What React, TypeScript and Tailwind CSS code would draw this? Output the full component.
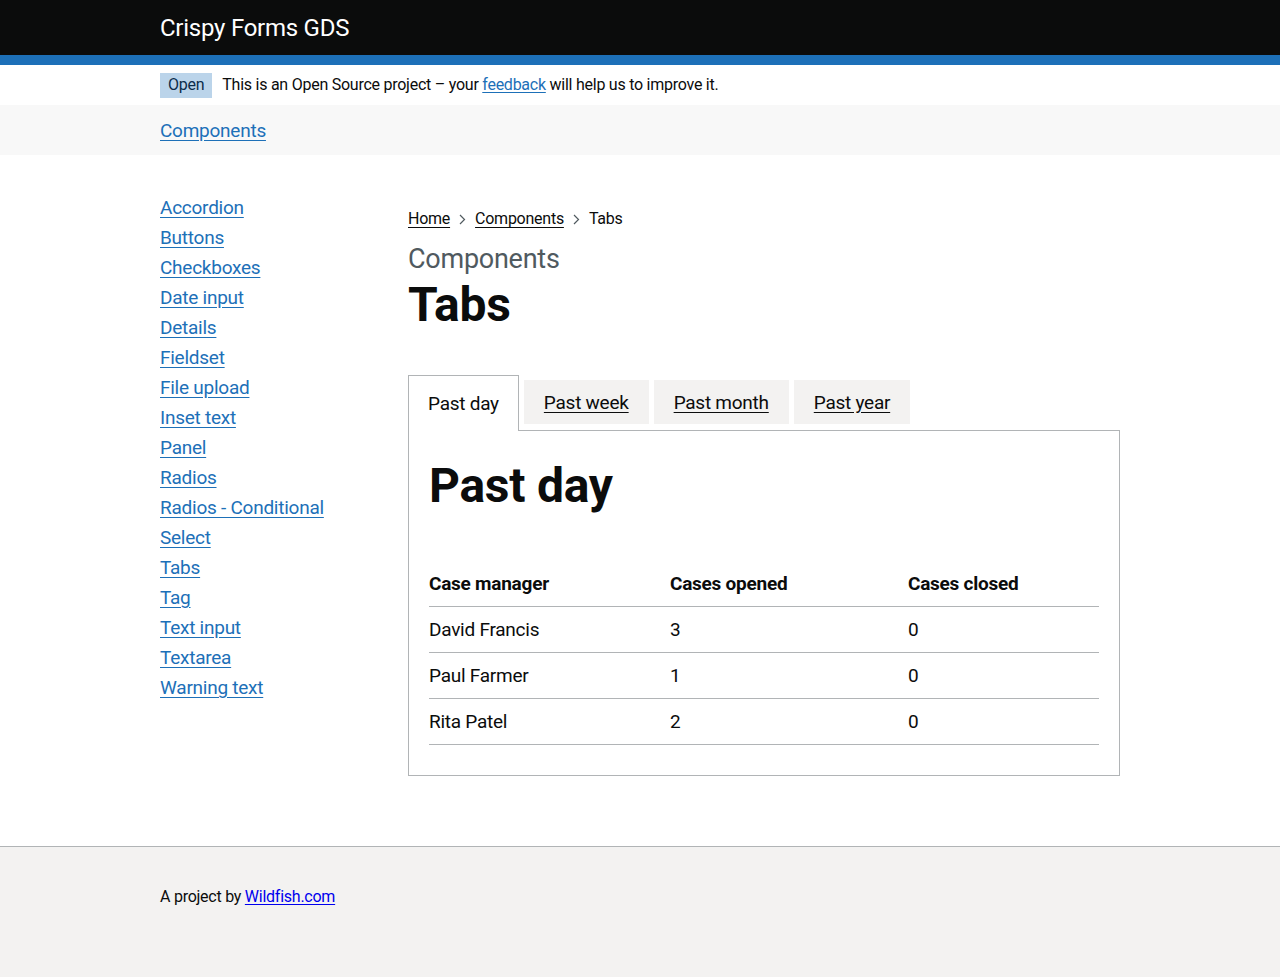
import React from "react";

const navItems = [
  "Accordion",
  "Buttons",
  "Checkboxes",
  "Date input",
  "Details",
  "Fieldset",
  "File upload",
  "Inset text",
  "Panel",
  "Radios",
  "Radios - Conditional",
  "Select",
  "Tabs",
  "Tag",
  "Text input",
  "Textarea",
  "Warning text",
];

const rows = [
  { name: "David Francis", opened: 3, closed: 0 },
  { name: "Paul Farmer", opened: 1, closed: 0 },
  { name: "Rita Patel", opened: 2, closed: 0 },
];

const tabs = ["Past day", "Past week", "Past month", "Past year"];

const Chevron = () => (
  <svg width="7" height="11" viewBox="0 0 7 11" className="mx-[9px]">
    <path d="M1 1l4.5 4.5L1 10" fill="none" stroke="#505a5f" strokeWidth="1.2" />
  </svg>
);

export default function App() {
  return (
    <div className="min-h-screen bg-white text-[#0b0c0c] tracking-[-0.25px]" style={{ fontFamily: 'Roboto, Arial, sans-serif' }}>
      {/* header */}
      <header className="bg-[#0b0c0c] border-b-[10px] border-[#1d70b8]">
        <div className="mx-auto w-[960px] h-[55px] flex items-center">
          <span className="text-white text-[24px] leading-[30px]">Crispy Forms GDS</span>
        </div>
      </header>

      {/* phase banner */}
      <div className="mx-auto w-[960px] h-[40px] flex items-center text-[16px] leading-[20px]">
        <span className="bg-[#bbd4ea] text-[#0c2d4a] px-[8px] h-[25px] flex items-center mr-[10px]">Open</span>
        <span>
          This is an Open Source project – your{" "}
          <a href="#" className="text-[#1d70b8] underline underline-offset-2">feedback</a> will help us to improve it.
        </span>
      </div>

      {/* nav bar */}
      <div className="bg-[#f8f8f8] h-[50px]">
        <div className="mx-auto w-[960px] h-full flex items-center">
          <a href="#" className="text-[19px] leading-[25px] text-[#1d70b8] underline underline-offset-[3px]">Components</a>
        </div>
      </div>

      {/* main */}
      <div className="mx-auto w-[960px] flex pt-[40px] pb-[70px]">
        <nav className="w-[248px] shrink-0">
          <ul className="flex flex-col">
            {navItems.map((item) => (
              <li key={item} className="h-[30px] leading-[25px]">
                <a href="#" className="text-[19px] text-[#1d70b8] underline underline-offset-[3px]">{item}</a>
              </li>
            ))}
          </ul>
        </nav>

        <main className="flex-1 pt-[14px]">
          <div className="flex items-center text-[16px] leading-[20px] h-[20px]">
            <a href="#" className="underline underline-offset-[3px]">Home</a>
            <Chevron />
            <a href="#" className="underline underline-offset-[3px]">Components</a>
            <Chevron />
            <span>Tabs</span>
          </div>

          <div className="mt-[15px] text-[27px] leading-[30px] text-[#505a5f]">Components</div>
          <h1 className="text-[48px] leading-[50px] font-bold mt-[6px]">Tabs</h1>

          <div className="mt-[45px]">
            <div className="flex items-end gap-[5px]">
              {tabs.map((t, i) =>
                i === 0 ? (
                  <div
                    key={t}
                    className="h-[56px] px-[19px] flex items-center bg-white border border-b-0 border-[#b1b4b6] text-[19px] leading-[25px] relative z-10 -mb-px pb-[1px]"
                  >
                    {t}
                  </div>
                ) : (
                  <a
                    key={t}
                    href="#"
                    className="h-[44px] mb-[6px] px-[20px] flex items-center bg-[#f3f2f1] text-[19px] leading-[25px] underline underline-offset-[3px]"
                  >
                    {t}
                  </a>
                )
              )}
            </div>

            <div className="border border-[#b1b4b6] px-[20px] pt-[30px] pb-[30px]">
              <h2 className="text-[48px] leading-[50px] font-bold">Past day</h2>
              <table className="w-full mt-[50px] text-[19px] leading-[25px] border-collapse">
                <thead>
                  <tr className="border-b border-[#b1b4b6] text-left">
                    <th className="font-bold py-[10px] w-[241px]">Case manager</th>
                    <th className="font-bold py-[10px] w-[238px]">Cases opened</th>
                    <th className="font-bold py-[10px]">Cases closed</th>
                  </tr>
                </thead>
                <tbody>
                  {rows.map((r) => (
                    <tr key={r.name} className="border-b border-[#b1b4b6]">
                      <td className="py-[10px]">{r.name}</td>
                      <td className="py-[10px]">{r.opened}</td>
                      <td className="py-[10px]">{r.closed}</td>
                    </tr>
                  ))}
                </tbody>
              </table>
            </div>
          </div>
        </main>
      </div>

      {/* footer */}
      <footer className="bg-[#f3f2f1] border-t border-[#b1b4b6] h-[131px]">
        <div className="mx-auto w-[960px] pt-[40px] text-[16px] leading-[20px]">
          A project by{" "}
          <a href="#" className="text-[#0000ee] underline underline-offset-2">Wildfish.com</a>
        </div>
      </footer>
    </div>
  );
}
